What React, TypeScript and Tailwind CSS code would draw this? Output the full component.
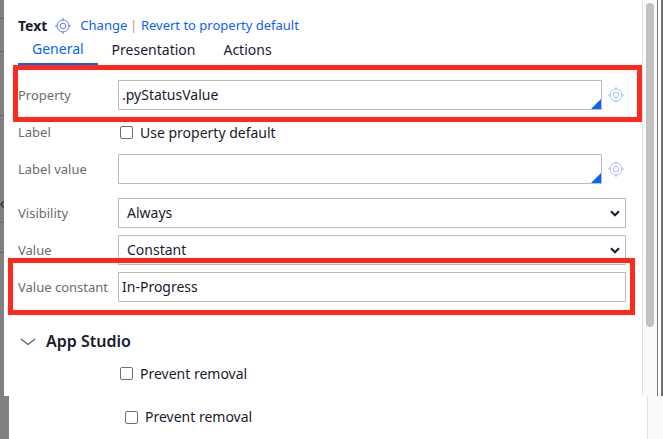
import React from 'react';

const TargetIcon: React.FC<{ className?: string }> = ({ className }) => (
  <svg width="18" height="18" viewBox="0 0 18 18" fill="none" stroke="currentColor" className={className}>
    <circle cx="9" cy="9" r="6" strokeWidth="1" />
    <circle cx="9" cy="9" r="2.8" strokeWidth="1" />
    <path d="M9 1v2.5M9 14.5V17M1 9h2.5M14.5 9H17" strokeWidth="1" />
  </svg>
);

const SelectChevron = () => (
  <svg width="10" height="7" viewBox="0 0 10 7" fill="none" stroke="#1c1c3a" strokeWidth="2.2" className="ml-auto mr-[5px]">
    <path d="M1 1.2l4 4 4-4" />
  </svg>
);

const Checkbox: React.FC<{ className?: string }> = ({ className }) => (
  <span className={`w-[13px] h-[13px] shrink-0 rounded-[2px] border border-[#6f6f6f] bg-white ${className}`} />
);

const TextInput: React.FC<{ value?: string; corner?: boolean; className?: string }> = ({ value, corner, className }) => (
  <div className={`relative h-[30px] border border-[#bdbdbd] flex items-center pb-[2px] bg-white text-[14px] text-[#1a1a2e] ${className}`}>
    {value}
    {corner && (
      <span className="absolute right-0 bottom-0 w-[10px] h-[10px] bg-[#0b5fff] [clip-path:polygon(100%_0,100%_100%,0_100%)]" />
    )}
  </div>
);

const Select: React.FC<{ value: string; className?: string }> = ({ value, className }) => (
  <div className={`w-[508px] border border-[#bdbdbd] flex items-center pl-[8px] bg-white text-[14px] text-[#1a1a2e] ${className}`}>
    <span className="-translate-y-[1px]">{value}</span>
    <SelectChevron />
  </div>
);

const Label: React.FC<{ children: React.ReactNode }> = ({ children }) => (
  <span className="w-[100px] shrink-0 pt-[2px] text-[13px] text-[#6c6c6c]">{children}</span>
);

const Tab: React.FC<{ active?: boolean; children: React.ReactNode }> = ({ active, children }) => (
  <div className={`px-[14px] flex items-center pb-[3px] text-[14px] ${active ? 'border-b-2 border-[#0b5fff] text-[#0b5fff]' : 'text-[#1a1a2e]'}`}>
    {children}
  </div>
);

const App: React.FC = () => {
  return (
    <div className="relative w-[663px] h-[439px] overflow-hidden bg-white font-['Noto_Sans','Open_Sans',sans-serif]">
      <div className="flex h-[396px]">
        {/* page behind the panel */}
        <div className="w-[4px] shrink-0 bg-[#808080] flex flex-col">
          <div className="h-[19px] border-b border-[#666]" />
          <div className="h-[33px] border-b border-[#666]" />
          <div className="h-[64px] border-b border-[#666]" />
          <div className="h-[107px] border-b border-[#666] flex items-end pb-[14px]">
            <svg width="4" height="7" viewBox="0 0 4 7" fill="none" stroke="#2a2a2a" strokeWidth="1.2">
              <path d="M3.5 .5L.8 3.5l2.7 3" />
            </svg>
          </div>
          <div className="h-[30px] border-b border-[#666]" />
        </div>

        <div className="w-[638px] shrink-0 pl-[14px] pt-[16px]">
          <div className="flex items-center h-[20px] pb-[1px] text-[13px]">
            <span className="text-[14px] font-bold text-[#1a1a2e]">Text</span>
            <TargetIcon className="ml-[7px] text-[#5b80ee]" />
            <span className="ml-[8px] text-[#0b5fff]">Change</span>
            <span className="ml-[3px] text-[12px] text-[#9a9a9a]">|</span>
            <span className="ml-[4px] text-[#0b5fff]">Revert to property default</span>
          </div>
          <div className="flex h-[29px]">
            <Tab active>General</Tab>
            <Tab>Presentation</Tab>
            <Tab>Actions</Tab>
          </div>

          <div className="flex items-center mt-[15px]">
            <Label>Property</Label>
            <TextInput value=".pyStatusValue" corner className="w-[484px] pl-[3px]" />
            <TargetIcon className="ml-[5px] text-[#a9bdf7]" />
          </div>
          <div className="flex items-center h-[16px] mt-[14px]">
            <Label>Label</Label>
            <Checkbox className="ml-[2px]" />
            <span className="ml-[7px] text-[14px] text-[#1a1a2e]">Use property default</span>
          </div>
          <div className="flex items-center mt-[14px]">
            <Label>Label value</Label>
            <TextInput corner className="w-[484px]" />
            <TargetIcon className="ml-[5px] text-[#a9bdf7]" />
          </div>
          <div className="flex items-center mt-[14px]">
            <Label>Visibility</Label>
            <Select value="Always" className="h-[30px]" />
          </div>
          <div className="flex items-center mt-[7px]">
            <Label>Value</Label>
            <Select value="Constant" className="h-[30px]" />
          </div>
          <div className="flex items-center mt-[7px]">
            <Label>Value constant</Label>
            <TextInput value="In-Progress" className="w-[508px] pl-[3px]" />
          </div>

          <div className="flex items-center h-[20px] mt-[30px]">
            <svg width="16" height="8" viewBox="0 0 16 8" fill="none" stroke="#5c5c6c" strokeWidth="1.2" className="ml-[2px]">
              <path d="M1 1l7 5.5L15 1" />
            </svg>
            <span className="ml-[10px] -translate-y-[1px] text-[16px] font-semibold text-[#1a1a2e]">App Studio</span>
          </div>
          <div className="flex items-center h-[16px] mt-[13px] pl-[102px]">
            <Checkbox />
            <span className="ml-[7px] text-[14px] text-[#1a1a2e]">Prevent removal</span>
          </div>
        </div>

        {/* scrollbar */}
        <div className="w-[15px] shrink-0 bg-[#fafafa] border-l border-[#e2e2e2] pl-[3px] pt-[3px]">
          <div className="w-[8px] h-[324px] rounded-[4px] bg-[#c1c1c1]" />
        </div>
        <div className="w-[1px] shrink-0 bg-[#7a7a7a]" />
        <div className="w-[3px] shrink-0 bg-white" />
        <div className="w-[2px] shrink-0 bg-[#6e6e6e]" />
      </div>

      <div className="flex h-[43px]">
        <div className="w-[9px] shrink-0 bg-[#808080]" />
        <div className="w-[638px] shrink-0 pl-[116px] pt-[13px]">
          <div className="flex items-center h-[16px]">
            <Checkbox />
            <span className="ml-[7px] -translate-y-[1px] text-[14px] text-[#1a1a2e]">Prevent removal</span>
          </div>
        </div>
        <div className="flex-1 bg-[#fafafa] border-l border-[#e2e2e2]" />
      </div>

      {/* red annotation boxes */}
      <div className="absolute left-[13px] top-[65px] w-[629px] h-[57px] border-[5px] border-[#ff2a1e]" />
      <div className="absolute left-[8px] top-[258px] w-[627px] h-[57px] border-[5px] border-[#ff2a1e]" />
    </div>
  );
};

export default App;
